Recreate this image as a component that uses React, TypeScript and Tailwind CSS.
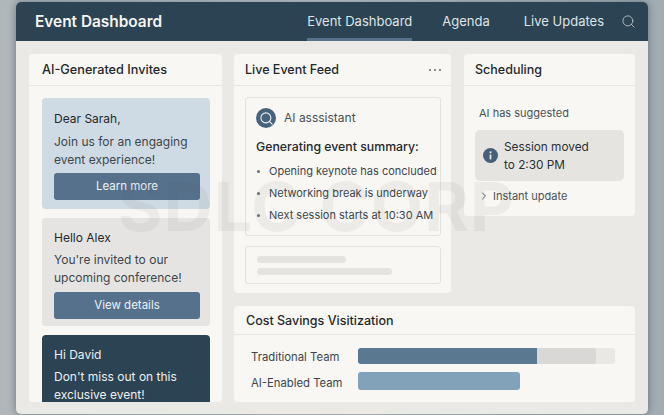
import { Search, ChevronRight } from 'lucide-react';

const font = { fontFamily: 'Inter, "Liberation Sans", sans-serif' };

const InviteButton = ({ label }: { label: string }) => (
  <div className="h-[27px] pt-[1px] rounded-[3px] bg-[#55718c] flex items-center justify-center text-[11.5px] text-[#eef2f5]">
    {label}
  </div>
);

const CardHeader = ({ title, children }: { title: string; children?: React.ReactNode }) => (
  <div className="h-[32px] shrink-0 flex items-center justify-between pt-[1px] px-[11px] border-b border-[#e8e6e2] text-[12.5px] font-medium text-[#25292c]">
    <span>{title}</span>
    {children}
  </div>
);

const feedItems = ['Opening keynote has concluded', 'Networking break is underway', 'Next session starts at 10:30 AM'];

export default function App() {
  return (
    <div
      className="relative w-[664px] h-[415px] overflow-hidden bg-gradient-to-r from-[#b0b7bb] via-[#c9cdcf] to-[#a2adb3] pt-[2px] pb-[1px] px-[16px]"
      style={font}
    >
      <div className="h-full flex flex-col rounded-[5px] overflow-hidden bg-[#eae9e6] shadow-[0_0_8px_rgba(40,60,75,0.55)]">
        <div className="h-[39px] shrink-0 bg-[#2b4352] flex items-center justify-between pl-[19px] pr-[12px]">
          <h1 className="text-[15.4px] font-semibold text-[#f4f4f2]">Event Dashboard</h1>
          <nav className="h-full flex items-center text-[13px] text-[#dfe4e6]">
            <div className="relative h-full flex items-center">
              Event Dashboard
              <div className="absolute left-0 right-0 bottom-0 h-[3px] bg-[#56728c]" />
            </div>
            <span className="ml-[30px]">Agenda</span>
            <span className="ml-[34px]">Live Updates</span>
            <Search size={15} strokeWidth={1.3} className="ml-[17px] text-[#c5ced3]" />
          </nav>
        </div>

        <div className="flex-1 min-h-0 flex gap-[12px] px-[13px] pt-[13px] pb-[12px]">
          <section className="w-[193px] shrink-0 rounded-[4px] bg-[#f8f7f4] overflow-hidden flex flex-col">
            <div className="h-[32px] shrink-0 flex items-center pt-[1px] px-[13px] border-b border-[#e8e6e2] text-[12.7px] font-medium text-[#25292c]">
              AI-Generated Invites
            </div>
            <div className="pl-[13px] pr-[12px] pt-[12px] flex flex-col gap-[9px]">
              <div className="h-[111px] shrink-0 rounded-[4px] bg-[#cfdbe4] pl-[12px] pr-[10px] pt-[13px]">
                <p className="text-[12px] leading-[16px] text-[#24282b]">Dear Sarah,</p>
                <p className="mt-[6px] text-[12px] leading-[17.5px] text-[#3d464c]">Join us for an engaging event experience!</p>
                <div className="mt-[5px]"><InviteButton label="Learn more" /></div>
              </div>
              <div className="h-[108px] shrink-0 rounded-[4px] bg-[#e5e4e2] pl-[12px] pr-[10px] pt-[12px]">
                <p className="text-[12px] leading-[16px] text-[#24282b]">Hello Alex</p>
                <p className="mt-[5px] text-[12px] leading-[18px] text-[#3d464c]">You're invited to our upcoming conference!</p>
                <div className="mt-[5px]"><InviteButton label="View details" /></div>
              </div>
              <div className="h-[80px] shrink-0 rounded-[4px] bg-[#2b4352] px-[12px] pt-[12px] text-[#eef0f0]">
                <p className="text-[12px] leading-[16px]">Hi David</p>
                <p className="mt-[5px] text-[12px] leading-[17.5px]">Don't miss out on this exclusive event!</p>
              </div>
            </div>
          </section>

          <div className="flex-1 min-w-0 flex flex-col gap-[13px]">
            <div className="flex gap-[13px] items-start">
              <section className="w-[217px] h-[239px] shrink-0 rounded-[4px] bg-[#f8f7f4]">
                <CardHeader title="Live Event Feed">
                  <div className="flex gap-[2.5px] mr-[-1px]">
                    <i className="w-[2.5px] h-[2.5px] rounded-full bg-[#666a6d]" />
                    <i className="w-[2.5px] h-[2.5px] rounded-full bg-[#666a6d]" />
                    <i className="w-[2.5px] h-[2.5px] rounded-full bg-[#666a6d]" />
                  </div>
                </CardHeader>
                <div className="mt-[11px] ml-[11px] mr-[10px] h-[139px] rounded-[3px] border border-[#e4e2de] pl-[10px] pt-[10px]">
                  <div className="flex items-center gap-[8px]">
                    <div className="w-[20px] h-[20px] rounded-full bg-[#47627a] flex items-center justify-center">
                      <Search size={15} strokeWidth={1.75} className="text-[#eef2f5]" />
                    </div>
                    <span className="text-[12px] text-[#4a5257]">AI asssistant</span>
                  </div>
                  <p className="mt-[10px] text-[12.3px] font-medium leading-[18px] text-[#25292c]">Generating event summary:</p>
                  <ul className="mt-[6px] flex flex-col gap-[4px]">
                    {feedItems.map((item) => (
                      <li key={item} className="flex items-center h-[18px] text-[11px] text-[#3d464c] whitespace-nowrap">
                        <span className="w-[3px] h-[3px] rounded-full bg-[#6c7478] ml-[1px] mr-[9px] shrink-0" />
                        {item}
                      </li>
                    ))}
                  </ul>
                </div>
                <div className="mt-[10px] ml-[11px] mr-[10px] h-[38px] rounded-[3px] border border-[#e4e2de] pl-[11px] pt-[9px]">
                  <div className="w-[89px] h-[7px] rounded-full bg-[#e4e3e0]" />
                  <div className="mt-[5px] w-[135px] h-[7px] rounded-full bg-[#e4e3e0]" />
                </div>
              </section>

              <section className="flex-1 h-[162px] rounded-[4px] bg-[#f8f7f4]">
                <CardHeader title="Scheduling" />
                <div className="px-[11px]">
                  <p className="mt-[19px] pl-[4px] text-[11px] leading-[16px] text-[#4a5257]">AI has suggested</p>
                  <div className="mt-[9px] h-[51px] rounded-[5px] bg-[#e5e4e1] flex items-center pl-[8px] gap-[6px]">
                    <svg width="15" height="15" viewBox="0 0 15 15" className="shrink-0">
                      <circle cx="7.5" cy="7.5" r="7.5" fill="#47607a" />
                      <circle cx="7.5" cy="4.3" r="1.1" fill="#e5e4e1" />
                      <rect x="6.6" y="6.6" width="1.8" height="4.8" rx="0.6" fill="#e5e4e1" />
                    </svg>
                    <p className="text-[11.8px] leading-[18px] text-[#2b3033]">Session moved<br />to 2:30 PM</p>
                  </div>
                  <div className="mt-[7px] flex items-center gap-[3px] text-[11px] text-[#4a5257]">
                    <ChevronRight size={12} strokeWidth={1.75} className="text-[#3d464c] ml-[3px]" />
                    Instant update
                  </div>
                </div>
              </section>
            </div>

            <section className="flex-1 rounded-[4px] bg-[#f8f7f4]">
              <div className="h-[29px] flex items-center pt-[3px] px-[12px] border-b border-[#e8e6e2] text-[12.5px] font-medium text-[#25292c]">
                Cost Savings Visitization
              </div>
              <div className="pl-[17px] pr-[20px] pt-[13px] flex flex-col gap-[8px]">
                <div className="flex items-center h-[16px]">
                  <span className="w-[107px] shrink-0 pt-[3px] text-[11.3px] text-[#3d464c]">Traditional Team</span>
                  <div className="flex-1 h-[16px] rounded-[3px] bg-[#e9e8e5] overflow-hidden">
                    <div className="w-[238px] h-full bg-[#d9d8d6] rounded-r-[2px]">
                      <div className="w-[179px] h-full bg-[#5a7890]" />
                    </div>
                  </div>
                </div>
                <div className="flex items-center h-[18px]">
                  <span className="w-[107px] shrink-0 pt-[4px] text-[11.3px] text-[#3d464c]">AI-Enabled Team</span>
                  <div className="w-[162px] h-[18px] rounded-[3px] bg-[#82a2ba]" />
                </div>
              </div>
            </section>
          </div>
        </div>
      </div>

      {/* watermark */}
      <div className="absolute left-[118px] top-[166px] text-[68px] leading-[80px] font-bold whitespace-nowrap tracking-[1px] text-[rgba(90,90,90,0.075)] pointer-events-none">
        SDLC CORP
      </div>
    </div>
  );
}
